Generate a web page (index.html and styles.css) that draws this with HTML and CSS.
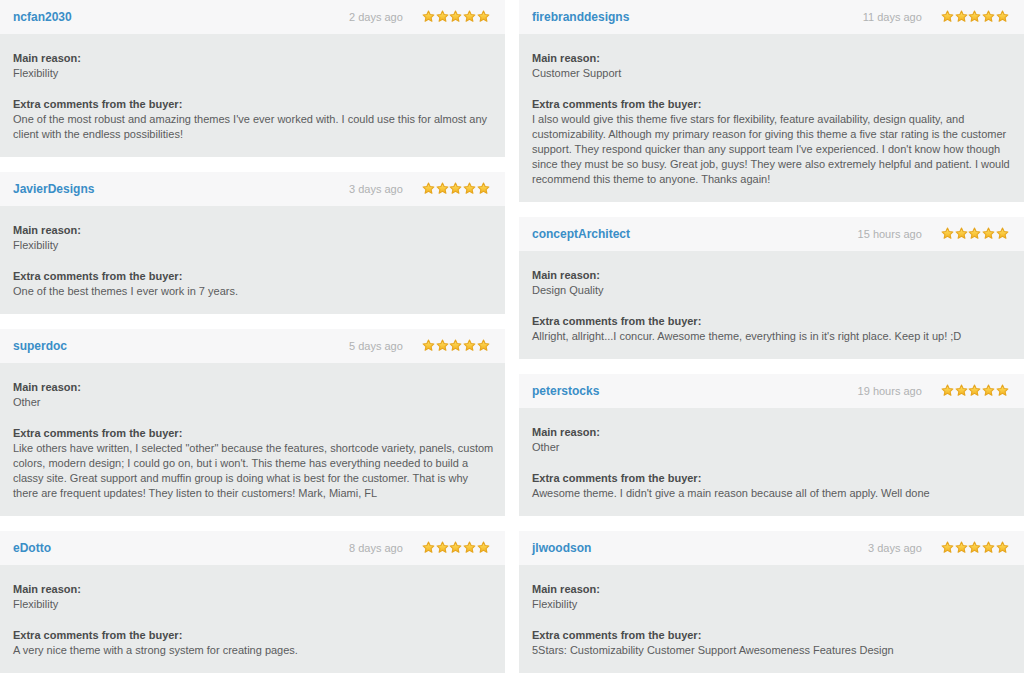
FILE: index.html
```html
<!DOCTYPE html>
<html>
<head>
<meta charset="utf-8">
<link rel="stylesheet" href="styles.css">
</head>
<body>
<svg class="defs" width="0" height="0" aria-hidden="true">
  <defs>
    <linearGradient id="sg" x1="0" y1="0" x2="0" y2="1">
      <stop offset="0" stop-color="#ffe066"/>
      <stop offset="1" stop-color="#f4b41e"/>
    </linearGradient>
    <symbol id="star" viewBox="0 0 24 24">
      <path d="M12 2 L15 8.4 L22 9.1 L16.8 13.9 L18.3 20.8 L12 17.2 L5.7 20.8 L7.2 13.9 L2 9.1 L9 8.4 Z" fill="url(#sg)" stroke="#e6a620" stroke-width="2" stroke-linejoin="round"/>
    </symbol>
  </defs>
</svg>
<main class="page">
  <section class="col">
    <article class="card">
      <header class="head"><span class="user">ncfan2030</span><span class="meta"><span class="date">2 days ago</span><span class="stars"><svg><use href="#star"/></svg><svg><use href="#star"/></svg><svg><use href="#star"/></svg><svg><use href="#star"/></svg><svg><use href="#star"/></svg></span></span></header>
      <div class="body">
        <div class="block"><p class="label">Main reason:</p><p class="text">Flexibility</p></div>
        <div class="block"><p class="label">Extra comments from the buyer:</p><p class="text">One of the most robust and amazing themes I've ever worked with. I could use this for almost any client with the endless possibilities!</p></div>
      </div>
    </article>
    <article class="card">
      <header class="head"><span class="user">JavierDesigns</span><span class="meta"><span class="date">3 days ago</span><span class="stars"><svg><use href="#star"/></svg><svg><use href="#star"/></svg><svg><use href="#star"/></svg><svg><use href="#star"/></svg><svg><use href="#star"/></svg></span></span></header>
      <div class="body">
        <div class="block"><p class="label">Main reason:</p><p class="text">Flexibility</p></div>
        <div class="block"><p class="label">Extra comments from the buyer:</p><p class="text">One of the best themes I ever work in 7 years.</p></div>
      </div>
    </article>
    <article class="card">
      <header class="head"><span class="user">superdoc</span><span class="meta"><span class="date">5 days ago</span><span class="stars"><svg><use href="#star"/></svg><svg><use href="#star"/></svg><svg><use href="#star"/></svg><svg><use href="#star"/></svg><svg><use href="#star"/></svg></span></span></header>
      <div class="body">
        <div class="block"><p class="label">Main reason:</p><p class="text">Other</p></div>
        <div class="block"><p class="label">Extra comments from the buyer:</p><p class="text">Like others have written, I selected "other" because the features, shortcode variety, panels, custom colors, modern design; I could go on, but i won't. This theme has everything needed to build a classy site. Great support and muffin group is doing what is best for the customer. That is why there are frequent updates! They listen to their customers! Mark, Miami, FL</p></div>
      </div>
    </article>
    <article class="card">
      <header class="head"><span class="user">eDotto</span><span class="meta"><span class="date">8 days ago</span><span class="stars"><svg><use href="#star"/></svg><svg><use href="#star"/></svg><svg><use href="#star"/></svg><svg><use href="#star"/></svg><svg><use href="#star"/></svg></span></span></header>
      <div class="body">
        <div class="block"><p class="label">Main reason:</p><p class="text">Flexibility</p></div>
        <div class="block"><p class="label">Extra comments from the buyer:</p><p class="text">A very nice theme with a strong system for creating pages.</p></div>
      </div>
    </article>
  </section>
  <section class="col">
    <article class="card">
      <header class="head"><span class="user">firebranddesigns</span><span class="meta"><span class="date">11 days ago</span><span class="stars"><svg><use href="#star"/></svg><svg><use href="#star"/></svg><svg><use href="#star"/></svg><svg><use href="#star"/></svg><svg><use href="#star"/></svg></span></span></header>
      <div class="body">
        <div class="block"><p class="label">Main reason:</p><p class="text">Customer Support</p></div>
        <div class="block"><p class="label">Extra comments from the buyer:</p><p class="text">I also would give this theme five stars for flexibility, feature availability, design quality, and customizability. Although my primary reason for giving this theme a five star rating is the customer support. They respond quicker than any support team I've experienced. I don't know how though since they must be so busy. Great job, guys! They were also extremely helpful and patient. I would recommend this theme to anyone. Thanks again!</p></div>
      </div>
    </article>
    <article class="card">
      <header class="head"><span class="user">conceptArchitect</span><span class="meta"><span class="date">15 hours ago</span><span class="stars"><svg><use href="#star"/></svg><svg><use href="#star"/></svg><svg><use href="#star"/></svg><svg><use href="#star"/></svg><svg><use href="#star"/></svg></span></span></header>
      <div class="body">
        <div class="block"><p class="label">Main reason:</p><p class="text">Design Quality</p></div>
        <div class="block"><p class="label">Extra comments from the buyer:</p><p class="text">Allright, allright...I concur. Awesome theme, everything is in it's right place. Keep it up! ;D</p></div>
      </div>
    </article>
    <article class="card">
      <header class="head"><span class="user">peterstocks</span><span class="meta"><span class="date">19 hours ago</span><span class="stars"><svg><use href="#star"/></svg><svg><use href="#star"/></svg><svg><use href="#star"/></svg><svg><use href="#star"/></svg><svg><use href="#star"/></svg></span></span></header>
      <div class="body">
        <div class="block"><p class="label">Main reason:</p><p class="text">Other</p></div>
        <div class="block"><p class="label">Extra comments from the buyer:</p><p class="text">Awesome theme. I didn't give a main reason because all of them apply. Well done</p></div>
      </div>
    </article>
    <article class="card">
      <header class="head"><span class="user">jlwoodson</span><span class="meta"><span class="date">3 days ago</span><span class="stars"><svg><use href="#star"/></svg><svg><use href="#star"/></svg><svg><use href="#star"/></svg><svg><use href="#star"/></svg><svg><use href="#star"/></svg></span></span></header>
      <div class="body">
        <div class="block"><p class="label">Main reason:</p><p class="text">Flexibility</p></div>
        <div class="block"><p class="label">Extra comments from the buyer:</p><p class="text">5Stars: Customizability Customer Support Awesomeness Features Design</p></div>
      </div>
    </article>
  </section>
</main>
</body>
</html>
```

FILE: styles.css
```css
* { box-sizing: border-box; }
html, body {
  margin: 0;
  padding: 0;
  background: #ffffff;
  font-family: "Liberation Sans", Arial, sans-serif;
}
.defs { position: absolute; width: 0; height: 0; overflow: hidden; }
.page {
  display: grid;
  grid-template-columns: 505px 505px;
  column-gap: 14px;
  align-items: start;
}
.col {
  display: flex;
  flex-direction: column;
  gap: 15px;
}
.card { background: #e9ebeb; }
.head {
  height: 34px;
  background: #f7f7f8;
  display: flex;
  align-items: center;
  justify-content: space-between;
  padding: 0 15px 0 13px;
}
.user {
  font-size: 12px;
  font-weight: bold;
  color: #3a8ec7;
}
.meta {
  display: flex;
  align-items: center;
  gap: 19px;
}
.date {
  font-size: 11px;
  color: #b0b2b3;
}
.stars {
  display: flex;
  gap: 0.8px;
  padding-bottom: 2px;
}
.stars svg {
  width: 13px;
  height: 13px;
  display: block;
}
.body {
  padding: 17px 11px 15px 13px;
}
.block + .block { margin-top: 16px; }
.label, .text {
  margin: 0;
  font-size: 11px;
  line-height: 15px;
}
.label {
  font-weight: bold;
  color: #4a4b4c;
}
.text {
  color: #5b5c5d;
}
```
